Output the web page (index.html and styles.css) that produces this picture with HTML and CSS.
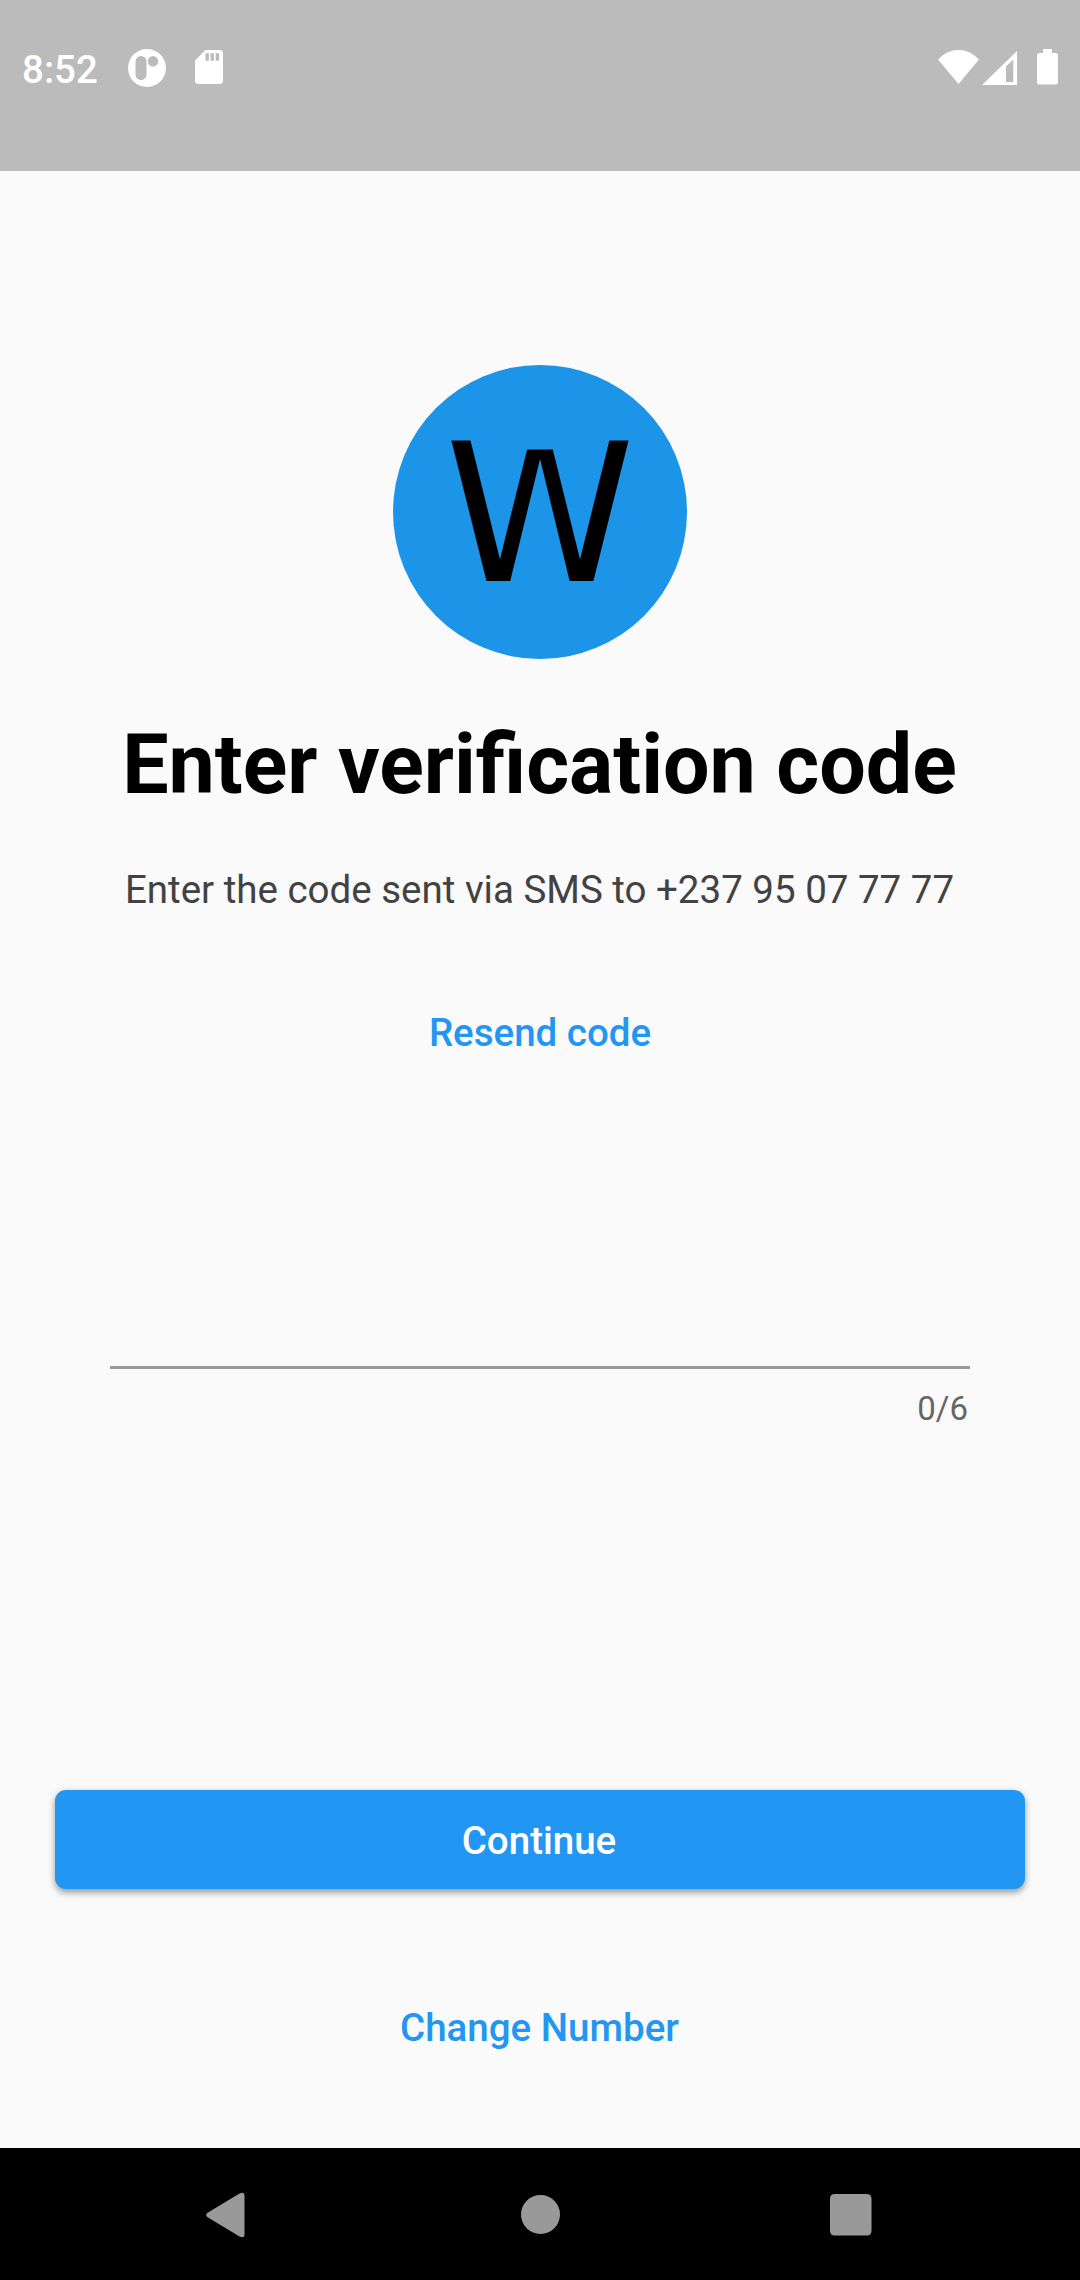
FILE: index.html
```html
<!DOCTYPE html>
<html lang="en">
<head>
<meta charset="utf-8">
<title>Enter verification code</title>
<link rel="stylesheet" href="styles.css">
</head>
<body>
<header class="status-bar">
  <div class="status-left">
    <span class="clock">8:52</span>
    <svg class="icon-app" width="38" height="38" viewBox="0 0 38 38"><path fill="#fff" fill-rule="evenodd" d="M19 0a19 19 0 1 1 0 38a19 19 0 1 1 0-38zM13 7a5.500 5.500 0 0 0-5.500 5.500v13a5.500 5.500 0 0 0 11 0v-13A5.500 5.500 0 0 0 13 7zM25 7a5.200 5.200 0 1 0 0 10.400a5.200 5.200 0 1 0 0-10.400z"/></svg>
    <svg class="icon-sd" width="28" height="34" viewBox="0 0 28 34"><path fill="#fff" fill-rule="evenodd" d="M10.500 0H24.500Q28 0 28 3.500V30.500Q28 34 24.500 34H3.500Q0 34 0 30.500V10.500zM10.500 3.300V10.800H13.900V3.300zM15.500 3.300V10.800H18.900V3.300zM20.700 3.300V10.800H24.100V3.300z"/></svg>
  </div>
  <div class="status-right">
    <svg class="icon-wifi" width="41" height="34" viewBox="0 0 41 34"><path fill="#fff" d="M20.500 34L0 9.500Q8.500 0 20.500 0T41 9.500z"/></svg>
    <svg class="icon-signal" width="35" height="34" viewBox="0 0 35 34"><path fill="#fff" fill-rule="evenodd" d="M35 0V34H0zM31.300 8.500L24 15.500V31H31.300z"/></svg>
    <svg class="icon-battery" width="21" height="36" viewBox="0 0 21 36"><path fill="#fff" d="M6 0H15V4H18.500Q21 4 21 6.500V33Q21 35.500 18.500 35.500H2.500Q0 35.500 0 33V6.500Q0 4 2.500 4H6z"/></svg>
  </div>
</header>
<main class="screen">
  <div class="logo"><span class="logo-letter">W</span></div>
  <h1 class="title">Enter verification code</h1>
  <p class="subtitle">Enter the code sent via SMS to +237 95 07 77 77</p>
  <button class="text-button resend">Resend code</button>
  <div class="field">
    <input class="code-input" type="text" maxlength="6" aria-label="Verification code">
    <span class="counter">0/6</span>
  </div>
  <button class="continue">Continue</button>
  <button class="text-button change">Change Number</button>
</main>
<nav class="nav-bar">
  <svg class="nav-back" width="39" height="46" viewBox="0 0 39 46"><path fill="#999" d="M1.200 21L33.500 1.500Q38.500-.8 38.500 4V42Q38.500 46.800 33.500 44.500L1.200 25Q-.8 23 1.200 21z"/></svg>
  <svg class="nav-home" width="39" height="39" viewBox="0 0 39 39"><circle cx="19.500" cy="19.500" r="19.500" fill="#999"/></svg>
  <svg class="nav-recent" width="42" height="42" viewBox="0 0 42 42"><rect width="41.500" height="41.500" rx="4.500" fill="#999"/></svg>
</nav>
</body>
</html>
```
FILE: styles.css
```css
* { box-sizing: border-box; }
body {
  margin: 0;
  width: 1080px;
  height: 2280px;
  display: flex;
  flex-direction: column;
  background: #fafafa;
  font-family: Roboto, "Liberation Sans", sans-serif;
  overflow: hidden;
}
button, input {
  border: 0;
  padding: 0;
  background: none;
  font-family: inherit;
}
svg { display: block; }

/* System status bar */
.status-bar {
  height: 171px;
  padding: 48px 22px 0;
  display: flex;
  justify-content: space-between;
  background: #bbb;
}
.status-left, .status-right { display: flex; align-items: flex-start; }
.clock {
  width: 106px;
  color: #fff;
  font-size: 38.5px;
  font-weight: 500;
  line-height: 43px;
}
.icon-app { margin-top: 0.5px; }
.icon-sd { margin: 2px 0 0 29px; }
.icon-wifi { margin-top: 2px; }
.icon-signal { margin: 2.5px 20px 0 3px; }
.icon-battery { margin-top: 1px; }

/* Verification form */
.screen {
  height: 1977px;
  padding: 194px 55px 0 54px;
  display: flex;
  flex-direction: column;
  align-items: center;
}
.logo {
  width: 294px;
  height: 294px;
  margin-left: 1px;
  border-radius: 50%;
  background: #1c94e8;
  display: flex;
  align-items: center;
  justify-content: center;
}
/* The middle peak is cut lower than the outer strokes */
.logo-letter {
  padding-top: 5px;
  font-family: "DejaVu Sans", sans-serif;
  font-size: 192px;
  line-height: 294px;
  color: #000;
  clip-path: polygon(0 0, 33% 0, 33% 87px, 67% 87px, 67% 0, 100% 0, 100% 100%, 0 100%);
}
.title {
  margin: 57px 0 0;
  font-size: 82.5px;
  font-weight: 700;
  line-height: 97px;
  color: #000;
  white-space: nowrap;
}
.subtitle {
  margin: 54px 0 0;
  font-size: 38.5px;
  line-height: 45px;
  color: #424242;
  white-space: nowrap;
}
.text-button {
  font-size: 38.5px;
  font-weight: 500;
  line-height: 45px;
  color: #2196f3;
}
.resend { margin: 98px 0 0 1px; }
.field {
  width: 860px;
  margin: 181px 0 0 1px;
  display: flex;
  flex-direction: column;
}
.code-input {
  height: 133px;
  border-bottom: 3px solid #9b9b9b;
  font-size: 44px;
}
.counter {
  margin: 20px 2px 0 0;
  align-self: flex-end;
  font-size: 33px;
  line-height: 39px;
  color: #666;
}
.continue {
  width: 970px;
  height: 99px;
  margin: 362px 0 0 1px;
  padding: 2px 2px 0 0;
  border-radius: 11px;
  background: #2196f3;
  box-shadow: 0 4px 6px rgba(0, 0, 0, .3), 0 1px 8px rgba(0, 0, 0, .12);
  color: #fff;
  font-size: 38.5px;
  font-weight: 500;
  line-height: 97px;
}
.change { margin-top: 116px; }

/* System navigation bar */
.nav-bar {
  height: 132px;
  padding: 1px 208px 0 206px;
  display: flex;
  justify-content: space-between;
  align-items: center;
  background: #000;
}
.nav-home { margin-left: 6px; }
```
